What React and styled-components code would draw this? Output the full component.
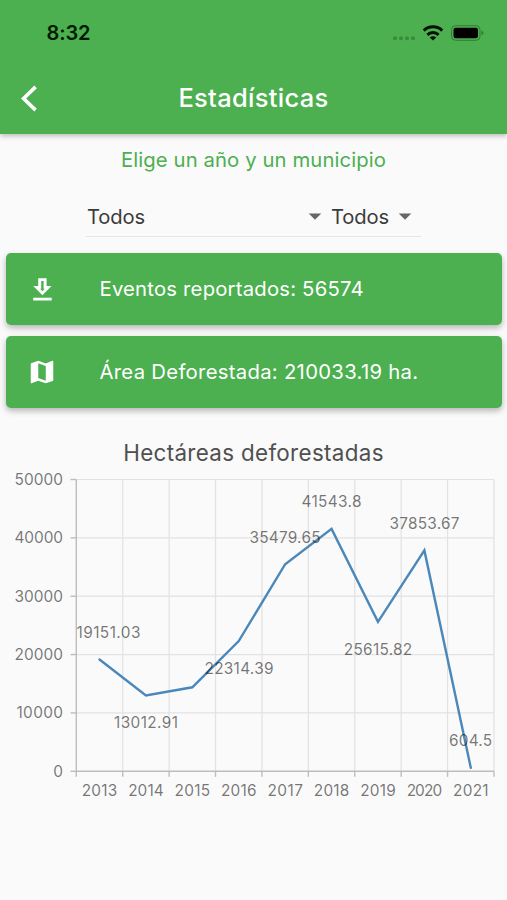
import styled, { createGlobalStyle } from "styled-components"
import { MdMap, MdArrowDropDown } from "react-icons/md"

const GlobalStyle = createGlobalStyle`
  * {
    box-sizing: border-box;
  }

  body {
    margin: 0;
    background: #fafafa;
    font-family: Inter, "Liberation Sans", sans-serif;
  }
`

const years = [
  { year: 2013, value: 19151.03, labelX: 108.5, labelY: 637.5, width: 64 },
  { year: 2014, value: 13012.91, labelX: 146, labelY: 727.5, width: 64 },
  { year: 2015, value: 14400 },
  { year: 2016, value: 22314.39, labelX: 239, labelY: 673.5, width: 69 },
  { year: 2017, value: 35479.65, labelX: 285, labelY: 542.5, width: 71 },
  { year: 2018, value: 41543.8, labelX: 331.5, labelY: 507, width: 60 },
  { year: 2019, value: 25615.82, labelX: 378, labelY: 654.5, width: 68.5 },
  { year: 2020, value: 37853.67, labelX: 424.5, labelY: 528.5, width: 70 },
  { year: 2021, value: 604.5, labelX: 470.5, labelY: 746, width: 43 },
]

const ticks = [0, 10000, 20000, 30000, 40000, 50000]

const plot = { left: 76.3, right: 494, top: 479.5, bottom: 771.3 }
const step = (plot.right - plot.left) / years.length
const toX = (index) => plot.left + step * (index + 0.5)
const toY = (value) => plot.bottom - (value / 50000) * (plot.bottom - plot.top)

const Screen = styled.main`
  display: flex;
  flex-direction: column;
  width: 507px;
  height: 900px;
  overflow: hidden;
  background: #fafafa;
`

const Header = styled.header`
  flex: none;
  height: 134px;
  background: #4caf50;
  box-shadow: 0 2px 5px rgba(0, 0, 0, 0.25);
`

const StatusBar = styled.div`
  display: flex;
  align-items: center;
  justify-content: space-between;
  height: 66px;
  padding: 0 23px 0 46.5px;
`

const Clock = styled.span`
  font-size: 20px;
  line-height: 26px;
  font-weight: 600;
  letter-spacing: -0.1px;
  color: #001a00;
`

const TitleBar = styled.div`
  display: grid;
  grid-template-columns: 60px 1fr 60px;
  align-items: center;
  height: 64px;
`

const BackButton = styled.button`
  display: flex;
  padding: 0 0 0 20px;
  border: 0;
  background: none;
`

const Title = styled.h1`
  margin: 0;
  text-align: center;
  font-size: 25.5px;
  line-height: 32px;
  font-weight: 550;
  letter-spacing: 0.3px;
  color: #fff;
`

const Hint = styled.p`
  margin: 12px 0 0;
  text-align: center;
  font-size: 20.3px;
  line-height: 28px;
  letter-spacing: 0.1px;
  color: #4caf50;
`

const Filters = styled.div`
  display: flex;
  align-self: flex-start;
  width: 335px;
  height: 42px;
  margin: 21px 0 0 86px;
  padding-left: 1px;
  border-bottom: 1px solid #e6e6e6;
`

const Select = styled.button`
  display: flex;
  align-items: center;
  justify-content: space-between;
  width: ${({ $width }) => $width}px;
  height: 42px;
  padding: 0 1px 0 0;
  border: 0;
  background: none;
  font-family: inherit;
  font-size: 20.2px;
  letter-spacing: -0.1px;
  color: #3c3c3c;

  svg {
    color: #666;
  }
`

const Cards = styled.section`
  display: flex;
  flex-direction: column;
  gap: 11px;
  margin-top: 16px;
  padding: 0 5px 0 6px;
`

const CardBox = styled.div`
  display: grid;
  grid-template-columns: 93.5px 1fr;
  align-items: center;
  height: 72px;
  border-radius: 5px;
  background: #4caf50;
  box-shadow: 0 3px 6px rgba(0, 0, 0, 0.28);
  color: #fff;

  svg {
    display: block;
    margin-left: ${({ $inset }) => $inset}px;
  }
`

const CardText = styled.span`
  font-size: 20.3px;
  line-height: 28px;
  letter-spacing: ${({ $spacing }) => $spacing}px;
`

const ChartTitle = styled.h2`
  margin: 29px 0 1px;
  text-align: center;
  font-size: 22.4px;
  line-height: 32px;
  font-weight: 400;
  letter-spacing: 0.33px;
  color: #505050;
`

const Chart = styled.svg`
  display: block;
  flex: none;

  text {
    font-size: 15.4px;
    fill: rgba(0, 0, 0, 0.54);
  }
`

function StatusIcons() {
  return (
    <svg width="92" height="24" viewBox="392 21 92 24">
      {[395, 401, 407, 413].map((x) => (
        <circle key={x} cx={x} cy="38.3" r="2" fill="#3b8b3e" />
      ))}
      <g fill="none" stroke="#001000" strokeWidth="3">
        <path d="M423.8 30.6a13.2 13.2 0 0 1 18.4 0" />
        <path d="M427.4 34.9a8 8 0 0 1 11.2 0" />
      </g>
      <path d="M429.8 37.4q3.2-2.4 6.4 0l-3.2 3.2z" fill="#001000" />
      <rect x="451.5" y="25.7" width="28.5" height="14.6" rx="4" fill="none" stroke="#347a37" />
      <rect x="453.5" y="27.7" width="24.5" height="10.6" rx="2.2" fill="#000" />
      <path d="M481.5 30.7q2 .6 2 2.3t-2 2.3z" fill="#347a37" />
    </svg>
  )
}

function DownloadIcon() {
  return (
    <svg width="28" height="28" viewBox="28 274 28 28" fill="currentColor">
      <path
        fillRule="evenodd"
        d="M38.2 277.2h8.4v7.9h4.9l-9.1 9.2-9.1-9.2h4.9zM41.2 280v7.8h-1.1l2.3 2.4 2.3-2.4h-1.1V280z"
      />
      <path d="M33.2 296.7h18.5v2.8H33.2z" />
    </svg>
  )
}

function Card({ icon, inset, spacing, children }) {
  return (
    <CardBox $inset={inset}>
      {icon}
      <CardText $spacing={spacing}>{children}</CardText>
    </CardBox>
  )
}

function LineChart() {
  const points = years.map(({ value }, index) => `${toX(index)},${toY(value)}`).join(" ")

  return (
    <Chart width="507" height="340" viewBox="0 470 507 340">
      <g stroke="#e2e2e2" strokeWidth="1.2">
        {ticks.slice(1).map((tick) => (
          <line key={tick} x1={plot.left} x2={plot.right} y1={toY(tick)} y2={toY(tick)} />
        ))}
        {years.map(({ year }, index) => {
          const x = plot.left + step * (index + 1)
          return <line key={year} x1={x} x2={x} y1={plot.top} y2={plot.bottom} />
        })}
      </g>

      <g stroke="#bdbdbd" strokeWidth="1.4">
        <line x1={plot.left} x2={plot.left} y1={plot.top} y2={plot.bottom + 5.5} />
        <line x1={plot.left} x2={plot.right} y1={plot.bottom} y2={plot.bottom} />
        {ticks.map((tick) => (
          <line key={tick} x1="70.5" x2={plot.left} y1={toY(tick)} y2={toY(tick)} />
        ))}
        {years.map(({ year }, index) => {
          const x = plot.left + step * (index + 1)
          return <line key={year} x1={x} x2={x} y1={plot.bottom} y2={plot.bottom + 5.5} />
        })}
      </g>

      <polyline points={points} fill="none" stroke="#4b87b9" strokeWidth="2.4" strokeLinecap="round" />

      {ticks.map((tick) => (
        <text
          key={tick}
          x="63"
          y={toY(tick) + 5.3}
          textAnchor="end"
          textLength={tick === 0 ? 9.5 : tick === 10000 ? 46.5 : 48.5}
        >
          {tick}
        </text>
      ))}

      {years.map(({ year }, index) => (
        <text key={year} x={toX(index)} y="796" textAnchor="middle" textLength="35.5">
          {year}
        </text>
      ))}

      {years
        .filter(({ width }) => width)
        .map(({ year, value, labelX, labelY, width }) => (
          <text key={year} x={labelX} y={labelY} textAnchor="middle" textLength={width}>
            {value}
          </text>
        ))}
    </Chart>
  )
}

export default function App() {
  return (
    <Screen>
      <GlobalStyle />
      <Header>
        <StatusBar>
          <Clock>8:32</Clock>
          <StatusIcons />
        </StatusBar>
        <TitleBar>
          <BackButton aria-label="Atrás">
            <svg width="20" height="28" viewBox="20 84 20 28" fill="none" stroke="#fff" strokeWidth="3.6">
              <path d="M35.6 86.9 23.6 98.5l12 11.6" />
            </svg>
          </BackButton>
          <Title>Estadísticas</Title>
        </TitleBar>
      </Header>

      <Hint>Elige un año y un municipio</Hint>

      <Filters>
        <Select $width={244}>
          Todos
          <MdArrowDropDown size={30} />
        </Select>
        <Select $width={90}>
          Todos
          <MdArrowDropDown size={30} />
        </Select>
      </Filters>

      <Cards>
        <Card icon={<DownloadIcon />} inset={22} spacing={0.2}>
          Eventos reportados: 56574
        </Card>
        <Card icon={<MdMap size={30} />} inset={21} spacing={0.29}>
          Área Deforestada: 210033.19 ha.
        </Card>
      </Cards>

      <ChartTitle>Hectáreas deforestadas</ChartTitle>
      <LineChart />
    </Screen>
  )
}
